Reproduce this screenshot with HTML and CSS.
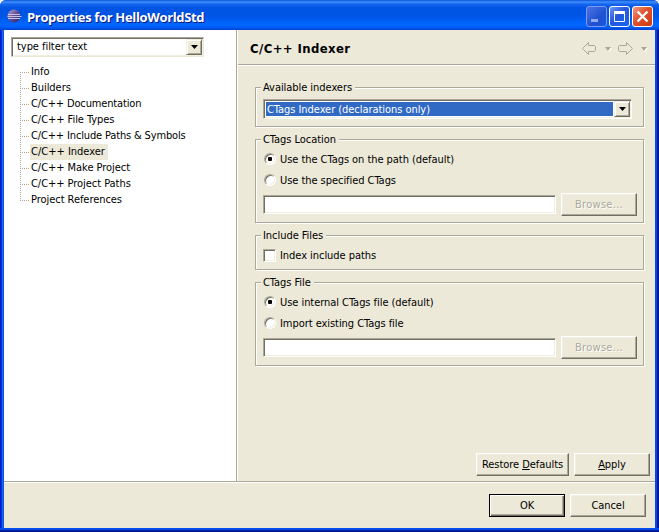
FILE: index.html
```html
<!DOCTYPE html>
<html lang="en">
<head>
<meta charset="utf-8">
<title>Properties for HelloWorldStd</title>
<link rel="stylesheet" href="styles.css">
</head>
<body>
<div class="window">
  <header class="titlebar">
    <svg class="logo" width="16" height="16" viewBox="0 0 16 16">
      <defs><linearGradient id="orb" x1="0" y1="0" x2="1" y2="1"><stop offset="0" stop-color="#b9a8d0"/><stop offset=".5" stop-color="#5d4c93"/><stop offset="1" stop-color="#2b2264"/></linearGradient></defs>
      <circle cx="7" cy="8" r="6.500" fill="url(#orb)"/>
      <path d="M1 6.500h12M.5 8.500h14M1 10.500h12" stroke="#c3c3e6" stroke-width="1"/>
    </svg>
    <h1 class="title">Properties for HelloWorldStd</h1>
    <div class="controls">
      <svg class="ctl ctl-min" width="21" height="21"><path d="M4 13.500h7" stroke="#93a9ec" stroke-width="3"/></svg>
      <svg class="ctl ctl-max" width="21" height="21"><path d="M4.500 4v10.500h10V4" fill="none" stroke="#fff"/><path d="M4 5.500h11" stroke="#fff" stroke-width="3"/></svg>
      <svg class="ctl ctl-close" width="21" height="21"><path d="M4.500 4.500l10 10M14.500 4.500l-10 10" stroke="#fff" stroke-width="2.400"/></svg>
    </div>
  </header>
  <div class="client">
    <div class="upper">
      <nav class="side">
        <div class="combo filter"><span class="combo-text">type filter text</span><span class="drop"><svg width="7" height="4"><path d="M0 0h7L3.500 4z"/></svg></span></div>
        <ul class="tree">
          <li><span>Info</span></li>
          <li><span>Builders</span></li>
          <li><span class="tight">C/C++ Documentation</span></li>
          <li><span>C/C++ File Types</span></li>
          <li><span class="tight">C/C++ Include Paths &amp; Symbols</span></li>
          <li><span class="selected">C/C++ Indexer</span></li>
          <li><span>C/C++ Make Project</span></li>
          <li><span>C/C++ Project Paths</span></li>
          <li><span>Project References</span></li>
        </ul>
      </nav>
      <main class="page">
        <div class="heading">
          <h2>C/C++ Indexer</h2>
          <svg class="history" width="67" height="14" fill="none" stroke="#aca899">
            <path d="M.5 6.500L6.500.5V3.500H12.500L13.500 4.500V8.500L12.500 9.500H6.500V12.500z"/>
            <path d="M24 6h6l-3 4z" fill="#fff" stroke="none"/><path d="M23 5h6l-3 4z" fill="#aca899" stroke="none"/>
            <path d="M50.500 6.500L44.500.5V3.500H37.500L36.500 4.500V8.500L37.500 9.500H44.500V12.500z"/>
            <path d="M60 6h6l-3 4z" fill="#fff" stroke="none"/><path d="M59 5h6l-3 4z" fill="#aca899" stroke="none"/>
          </svg>
        </div>
        <div class="groups">
          <section class="group indexers">
            <h3>Available indexers</h3>
            <div class="combo"><span class="combo-text active">CTags Indexer (declarations only)</span><span class="drop"><svg width="7" height="4"><path d="M0 0h7L3.500 4z"/></svg></span></div>
          </section>
          <section class="group source">
            <h3>CTags Location</h3>
            <label class="option"><i class="radio on"></i><span>Use the CTags on the path (default)</span></label>
            <label class="option"><i class="radio"></i><span>Use the specified CTags</span></label>
            <div class="browse"><span class="field"></span><button class="btn" disabled>Browse...</button></div>
          </section>
          <section class="group include">
            <h3>Include Files</h3>
            <label class="option"><i class="check"></i><span>Index include paths</span></label>
          </section>
          <section class="group source">
            <h3>CTags File</h3>
            <label class="option"><i class="radio on"></i><span>Use internal CTags file (default)</span></label>
            <label class="option"><i class="radio"></i><span>Import existing CTags file</span></label>
            <div class="browse"><span class="field"></span><button class="btn" disabled>Browse...</button></div>
          </section>
        </div>
        <div class="page-actions"><button class="btn wide">Restore <u>D</u>efaults</button><button class="btn"><u>A</u>pply</button></div>
      </main>
    </div>
    <footer class="actions"><button class="btn default">OK</button><button class="btn">Cancel</button></footer>
  </div>
</div>
</body>
</html>
```
FILE: styles.css
```css
* { box-sizing: border-box; }
html { background: #fff; }
body { margin: 0; font: 11px/16px "DejaVu Sans Condensed", "DejaVu Sans", sans-serif; font-stretch: condensed; letter-spacing: -.05px; color: #000; white-space: nowrap; }
h1, h2, h3, ul { margin: 0; padding: 0; }
.window { width: 659px; height: 532px; display: flex; flex-direction: column; overflow: hidden; border-radius: 6px 6px 0 0; background: #0a4be0; }
.titlebar { height: 30px; flex: none; display: flex; align-items: center; padding: 0 6px 0 7px; background: linear-gradient(#0a50d8 0, #3f91ff 2px, #1766ee 4px, #0054e3 8px, #0055e5 16px, #0066ff 24px, #0061fa 27px, #003fd0 30px); }
.logo { flex: none; margin-top: 2px; }
.title { flex: 1; margin-left: 4px; padding-top: 3px; font: bold 13px/20px "Open Sans", sans-serif; letter-spacing: -.34px; color: #fff; text-shadow: 1px 1px #0a1883; }
.controls { display: flex; gap: 2px; padding-top: 3px; }
.ctl { display: block; border: 1px solid #fff; border-radius: 3px; }
.ctl-min { border-color: #7b9bf0; background: linear-gradient(135deg, #4d74e6, #2050d0 60%, #1b58de); }
.ctl-max { background: linear-gradient(135deg, #6b95f4, #2458dc 45%, #1765f0); }
.ctl-close { background: linear-gradient(135deg, #f09a80, #e0502c 45%, #cf3a10); }
.client { flex: 1; display: flex; flex-direction: column; padding: 0 4px 4px; background: linear-gradient(#ece9d8, #ece9d8) 4px 0 / 651px 498px no-repeat, linear-gradient(#0a52ee, #0046e8 50%, #0022b0 50%, #00138c) 0 100% / 100% 4px no-repeat, linear-gradient(90deg, #0019cf 0 1px, #0831d9 1px 2px, #166aee 2px 3px, #0855dd 3px 4px, transparent 4px 655px, #0048f1 655px 657px, #001ea0 657px 658px, #00138c 658px); }
.upper { height: 452px; flex: none; display: flex; border-bottom: 1px solid #aca899; box-shadow: 0 1px #fff; }
.side { width: 233px; background: #fff; border-right: 1px solid #aca899; padding: 7px 0 0 7px; }
.combo { height: 20px; display: flex; padding: 2px; border: 1px solid; border-color: #aca899 #fff #fff #aca899; box-shadow: inset 1px 1px #716f64, inset -1px -1px #f1efe2; background: #fff; }
.filter { width: 193px; border-right-color: #ece9d8; border-bottom-color: #ece9d8; }
.combo-text { flex: 1; padding-left: 3px; line-height: 16px; }
.filter .combo-text { line-height: 14px; }
.combo .active { padding-left: 1px; margin-right: 1px; line-height: 15px; background: #316ac5; color: #fff; }
.drop { width: 16px; height: 16px; margin: -1px -1px 0 0; display: flex; align-items: center; justify-content: center; background: #ece9d8; border: 1px solid; border-color: #f1efe2 #716f64 #716f64 #f1efe2; box-shadow: inset 1px 1px #fff, inset -1px -1px #aca899; }
.tree { list-style: none; margin-top: 7px; padding-left: 9px; }
.tree li { height: 16px; display: flex; background: repeating-linear-gradient(90deg, #aca899 0 1px, transparent 1px 2px) 0 8px / 10px 1px no-repeat, repeating-linear-gradient(#aca899 0 1px, transparent 1px 2px) 0 0 / 1px 16px no-repeat; padding-left: 10px; }
.tree li:first-child { background-position: 0 8px, 0 8px; }
.tree li:last-child { background-size: 10px 1px, 1px 9px; }
.tree span { padding: 0 3px 0 1px; }
.tree .tight { letter-spacing: -.15px; }
.tree .selected { background: #ece9d8; letter-spacing: 0; }
.page { flex: 1; display: flex; flex-direction: column; border-left: 1px solid #fff; }
.heading { height: 35px; flex: none; display: flex; justify-content: space-between; padding: 0 6px 0 12px; border-bottom: 1px solid #aca899; box-shadow: 0 1px #fff; }
.heading h2 { font-size: 13px; line-height: 37px; letter-spacing: .4px; }
.history { margin-top: 12px; }
.groups { padding: 22px 0 0 17px; display: flex; flex-direction: column; gap: 12px; }
.group { width: 389px; border: 1px solid #aca899; box-shadow: 1px 1px #fff, inset 1px 1px #fff; padding: 0 6px 0 7px; }
.group h3 { width: max-content; height: 16px; margin: -8px 0 0 -2px; padding: 0 3px 0 2px; font: inherit; line-height: 16px; background: #ece9d8; }
.indexers { height: 40px; }
.indexers .combo { margin: 3px 5px 0 0; }
.source { height: 84px; }
.include { height: 35px; }
.option { height: 21px; display: flex; align-items: center; }
.option span { margin-left: 4px; }
.group h3 + .option { margin-top: 1px; }
.radio { width: 12px; height: 12px; margin: -2px 0 0 1px; border-radius: 50%; border: 1px solid; border-color: #aca899 #fff #fff #aca899; background: #fff; box-shadow: inset 1px 1px #716f64, inset -1px -1px #f1efe2; display: grid; place-items: center; }
.radio.on::after { content: ""; width: 4px; height: 4px; border-radius: 1px; background: #000; }
.check { width: 13px; height: 13px; border: 1px solid; border-color: #aca899 #fff #fff #aca899; background: #fff; box-shadow: inset 1px 1px #716f64, inset -1px -1px #f1efe2; }
.browse { display: flex; gap: 5px; align-items: center; margin-top: 2px; }
.field { width: 293px; height: 19px; background: #fff; border: 1px solid; border-color: #aca899 #fff #fff #aca899; box-shadow: inset 1px 1px #716f64, inset -1px -1px #f1efe2; }
.btn { width: 76px; height: 23px; padding: 0; font: inherit; letter-spacing: inherit; color: #000; background: #ece9d8; border: 1px solid; border-color: #fff #716f64 #716f64 #fff; box-shadow: inset -1px -1px #aca899, inset 1px 1px #f1efe2; }
.btn:disabled { color: #aca899; text-shadow: 1px 1px #fff; letter-spacing: .3px; }
.wide { width: 93px; }
.default { border-color: #000; box-shadow: inset 1px 1px #fff, inset -1px -1px #716f64, inset -2px -2px #aca899; }
.page-actions { display: flex; justify-content: flex-end; gap: 5px; margin-top: auto; padding: 0 5px 5px 0; }
.actions { display: flex; justify-content: flex-end; gap: 5px; padding: 12px 9px 0 0; }
```
